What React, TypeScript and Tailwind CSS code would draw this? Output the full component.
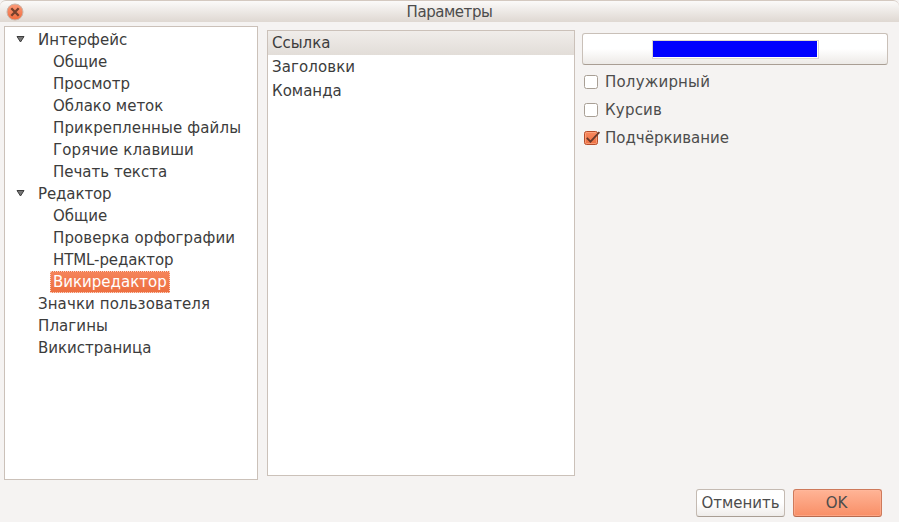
const tree = [
  {
    label: "Интерфейс",
    tracking: "tracking-[0.1px]",
    items: [
      { label: "Общие" },
      { label: "Просмотр" },
      { label: "Облако меток" },
      { label: "Прикрепленные файлы", tracking: "tracking-[0.13px]" },
      { label: "Горячие клавиши", tracking: "tracking-[0.1px]" },
      { label: "Печать текста" },
    ],
  },
  {
    label: "Редактор",
    tracking: "tracking-[-0.1px]",
    items: [
      { label: "Общие" },
      { label: "Проверка орфографии", tracking: "tracking-[0.1px]" },
      { label: "HTML-редактор", tracking: "tracking-[-0.1px]" },
      { label: "Викиредактор", selected: true },
    ],
  },
  { label: "Значки пользователя", tracking: "tracking-[0.1px]", items: [] },
  { label: "Плагины", tracking: "tracking-[0.1px]", items: [] },
  { label: "Викистраница", items: [] },
] as {
  label: string;
  tracking?: string;
  items: { label: string; tracking?: string; selected?: boolean }[];
}[];

function Arrow() {
  return (
    <svg width="9" height="8" viewBox="0 0 9 8" className="mb-[2px] ml-[11px] mr-[13px] shrink-0">
      <path d="M1 1.5H8L4.5 7Z" fill="#777" stroke="#3c3c3c" strokeLinejoin="round" />
    </svg>
  );
}

function Check({ label, checked = false, tracking = "" }: { label: string; checked?: boolean; tracking?: string }) {
  return (
    <label className="flex h-7 items-center gap-[6px] pl-[2px] text-[#4c4c4c]">
      <svg width="15" height="16" viewBox="0 0 15 16" className="shrink-0 overflow-visible">
        <defs>
          <linearGradient id="tick" x1="0" y1="0" x2="0" y2="1">
            <stop offset="0" stopColor="#f8895f" />
            <stop offset="1" stopColor="#ed7043" />
          </linearGradient>
        </defs>
        <rect x="0.5" y="1.5" width="13" height="13" rx="2" fill={checked ? "url(#tick)" : "#fff"} stroke={checked ? "#b64d2b" : "#a89f95"} />
        {checked && <rect x="1.5" y="2.5" width="11" height="11" rx="1" fill="none" stroke="#ffb491" strokeOpacity="0.6" />}
        {checked && <path d="M2.8 7.8L6.5 11.6L15.4 2.2" fill="none" stroke="#69392a" strokeWidth="1.8" />}
      </svg>
      <span className={tracking}>{label}</span>
    </label>
  );
}

export default function App() {
  return (
    <div className="flex h-[522px] w-[899px] flex-col overflow-hidden bg-[#f5f3f2] font-['DejaVu_Sans',sans-serif] text-[15px] leading-[22px] text-[#3c3c3c]">
      <header className="flex h-[22px] shrink-0 items-center rounded-t-[6px] border-t border-[#d4c9c0] bg-linear-to-b from-[#fbfaf9] to-[#dfd8d2] pl-[6px]">
        <svg width="18" height="18" viewBox="0 0 18 18" className="shrink-0">
          <defs>
            <linearGradient id="close" x1="0" y1="0" x2="0" y2="1">
              <stop offset="0" stopColor="#fb9a78" />
              <stop offset="1" stopColor="#f06c3e" />
            </linearGradient>
          </defs>
          <circle cx="9" cy="9" r="8" fill="url(#close)" stroke="#c9b5a9" />
          <path d="M5.3 5.3L12.7 12.7M12.7 5.3L5.3 12.7" stroke="#75412d" strokeWidth="2.3" />
        </svg>
        <h1 className="mr-6 flex-1 text-center text-[15px] tracking-[-0.45px] text-[#4c4c4c]">Параметры</h1>
      </header>
      <main className="flex h-[458px] shrink-0 pl-1 pt-1">
        <nav className="h-[454px] w-[254px] border border-[#cbc1b9] bg-white pt-[2px]">
          {tree.map((group) => (
            <div key={group.label}>
              <div className={`flex h-[22px] items-center ${group.items.length ? "" : "pl-[33px]"}`}>
                {group.items.length > 0 && <Arrow />}
                <span className={group.tracking}>{group.label}</span>
              </div>
              {group.items.map((item) => (
                <div key={item.label} className="flex h-[22px] pl-[45px]">
                  <span
                    className={`whitespace-nowrap ${item.tracking ?? ""} ${
                      item.selected
                        ? "border border-dotted border-[#fbd4c4] bg-linear-to-b from-[#f5845a] to-[#ed6f40] px-[2px] leading-5 text-white"
                        : "px-[3px]"
                    }`}
                  >
                    {item.label}
                  </span>
                </div>
              ))}
            </div>
          ))}
        </nav>
        <section className="ml-[9px] mt-1 h-[446px] w-[308px] border border-[#cbc1b9] bg-white leading-6">
          <div className="h-6 bg-linear-to-b from-[#f0edea] to-[#e2ddd8] pl-1">Ссылка</div>
          <div className="h-6 pl-1 tracking-[0.1px]">Заголовки</div>
          <div className="h-6 pl-1">Команда</div>
        </section>
        <section className="ml-[7px] mt-[7px] w-[306px]">
          <button className="mb-[3px] flex h-8 w-full items-center justify-center rounded-[3px] border border-[#c9c0b8] border-b-[#a99e94] bg-linear-to-b from-white from-50% to-[#edeae7]">
            <span className="mt-px h-[19px] w-[167px] border border-[#dcd6d0] bg-white pb-px pr-px">
              <span className="block h-4 w-[164px] bg-[#0000ff]" />
            </span>
          </button>
          <Check label="Полужирный" tracking="tracking-[0.2px]" />
          <Check label="Курсив" tracking="tracking-[0.2px]" />
          <Check label="Подчёркивание" checked />
        </section>
      </main>
      <footer className="flex justify-end gap-2 pr-[17px] pt-[9px] text-[#4c4c4c]">
        <button className="h-7 w-[89px] whitespace-nowrap rounded-[3px] border border-[#c4bab2] border-b-[#a99e94] bg-linear-to-b from-white from-50% to-[#efecea] leading-[26px]">Отменить</button>
        <button className="h-7 w-[89px] rounded-[3px] border border-[#ce7a5b] border-b-[#b86a4e] bg-linear-to-b from-[#ffb496] to-[#f88e66] pr-[2px] leading-[26px] shadow-[inset_0_0_0_1px_#ffba9f80]">OK</button>
      </footer>
    </div>
  );
}
